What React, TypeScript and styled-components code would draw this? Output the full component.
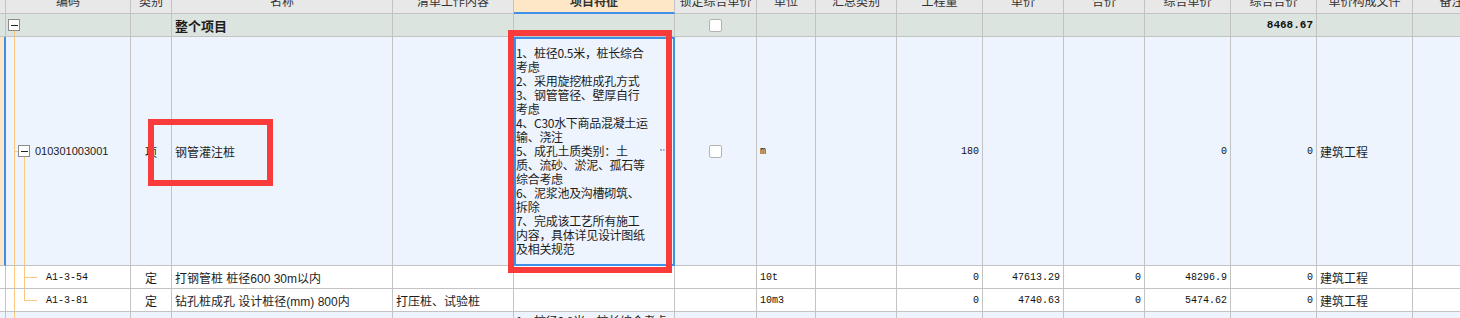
import React from "react";
import styled, { createGlobalStyle, css } from "styled-components";

const GRID = "#c3c3c3";
const GUIDE = "#fbc87d";
const BLUE = "#3f8fe9";
const PEACH = "#fde7c7";
const RED = "#fa3b3c";

const widths = [6, 125, 41, 221, 121, 161, 82, 59, 81, 86, 81, 81, 86, 86, 96, 78];
const sheetWidth = widths.reduce((a, b) => a + b, 0);

const headers = [
  "",
  "编码",
  "类别",
  "名称",
  "清单工作内容",
  "项目特征",
  "锁定综合单价",
  "单位",
  "汇总类别",
  "工程量",
  "单价",
  "合价",
  "综合单价",
  "综合合价",
  "单价构成文件",
  "备注",
];

type Tone = "head" | "root" | "bill" | "quota";
type Tree = "root" | "bill" | "quota" | "quotaLast" | "billNext";

const toneBg: Record<Tone, string> = {
  head: "#e8e8e8",
  root: "#dce4df",
  bill: "#edf4fe",
  quota: "#ffffff",
};

interface Line {
  tone: Tone;
  height: number;
  active?: boolean;
  tree: Tree;
  code?: string;
  codeMono?: boolean;
  kind?: string;
  name?: string;
  work?: string;
  spec?: string[];
  specTop?: boolean;
  selected?: boolean;
  lock?: boolean;
  unit?: string;
  qty?: string;
  price?: string;
  total?: string;
  unitComp?: string;
  compTotal?: string;
  file?: string;
}

const lines: Line[] = [
  {
    tone: "root",
    height: 23,
    tree: "root",
    name: "整个项目",
    lock: true,
    compTotal: "8468.67",
  },
  {
    tone: "bill",
    height: 229,
    active: true,
    tree: "bill",
    code: "010301003001",
    kind: "项",
    name: "钢管灌注桩",
    selected: true,
    spec: [
      "1、桩径0.5米，桩长综合",
      "考虑",
      "2、采用旋挖桩成孔方式",
      "3、钢管管径、壁厚自行",
      "考虑",
      "4、C30水下商品混凝土运",
      "输、浇注",
      "5、成孔土质类别：土",
      "质、流砂、淤泥、孤石等",
      "综合考虑",
      "6、泥浆池及沟槽砌筑、",
      "拆除",
      "7、完成该工艺所有施工",
      "内容，具体详见设计图纸",
      "及相关规范",
    ],
    lock: true,
    unit: "m",
    qty: "180",
    unitComp: "0",
    compTotal: "0",
    file: "建筑工程",
  },
  {
    tone: "quota",
    height: 23,
    tree: "quota",
    code: "A1-3-54",
    codeMono: true,
    kind: "定",
    name: "打钢管桩 桩径600 30m以内",
    unit: "10t",
    qty: "0",
    price: "47613.29",
    total: "0",
    unitComp: "48296.9",
    compTotal: "0",
    file: "建筑工程",
  },
  {
    tone: "quota",
    height: 23,
    tree: "quotaLast",
    code: "A1-3-81",
    codeMono: true,
    kind: "定",
    name: "钻孔桩成孔 设计桩径(mm) 800内",
    work: "打压桩、试验桩",
    unit: "10m3",
    qty: "0",
    price: "4740.63",
    total: "0",
    unitComp: "5474.62",
    compTotal: "0",
    file: "建筑工程",
  },
  {
    tone: "bill",
    height: 120,
    tree: "billNext",
    spec: ["1、桩径0.8米，桩长综合考虑", "2、采用旋挖桩成孔方式"],
    specTop: true,
  },
];

const GlobalStyle = createGlobalStyle`
  html, body {
    margin: 0;
    padding: 0;
    background: #fff;
  }
  body {
    font-family: "Liberation Sans", "Noto Sans CJK SC", sans-serif;
    font-size: 12px;
    color: #1d1d1d;
  }
`;

const Viewport = styled.div`
  position: relative;
  width: 1460px;
  height: 318px;
  overflow: hidden;
`;

const Sheet = styled.div`
  width: ${sheetWidth}px;
  margin-top: -12px;
`;

const Row = styled.div<{ $tone: Tone; $h: number }>`
  display: grid;
  grid-template-columns: ${widths.map((w) => `${w}px`).join(" ")};
  height: ${(p) => p.$h}px;
  background: ${(p) => toneBg[p.$tone]};
`;

const Cell = styled.div<{
  $align?: "left" | "center" | "right";
  $mono?: boolean;
  $bold?: boolean;
}>`
  box-sizing: border-box;
  min-width: 0;
  display: flex;
  align-items: center;
  justify-content: ${(p) =>
    p.$align === "right" ? "flex-end" : p.$align === "center" ? "center" : "flex-start"};
  padding: 0 3px;
  border-right: 1px solid ${GRID};
  border-bottom: 1px solid ${GRID};
  white-space: nowrap;
  overflow: hidden;

  ${(p) =>
    p.$mono &&
    css`
      font-family: "Liberation Mono", "Noto Sans CJK SC", monospace;
      font-size: 10px;
      color: #111;
    `}

  ${(p) =>
    p.$mono &&
    p.$bold &&
    css`
      font-size: 11px;
      font-weight: 700;
    `}
`;

const HeadCell = styled(Cell)<{ $active?: boolean }>`
  justify-content: center;
  color: #333;

  ${(p) =>
    p.$active &&
    css`
      background: ${PEACH};
      border-bottom: 2px solid ${BLUE};
      font-weight: 700;
    `}
`;

const Indicator = styled.div<{ $active?: boolean }>`
  box-sizing: border-box;
  border-right: 1px solid ${GRID};
  border-bottom: 1px solid ${GRID};

  ${(p) =>
    p.$active &&
    css`
      background: ${PEACH};
      border-right: 2px solid ${BLUE};
    `}
`;

const CodeCell = styled(Cell)<{ $indent: number }>`
  position: relative;
  padding-left: ${(p) => p.$indent}px;
`;

const Trunk = styled.span<{ $x: number; $fromBox?: boolean; $toMid?: boolean }>`
  position: absolute;
  left: ${(p) => p.$x}px;
  top: ${(p) => (p.$fromBox ? "calc(50% + 6px)" : "0")};
  bottom: ${(p) => (p.$toMid ? "calc(50% - 1px)" : "0")};
  width: 1px;
  background: ${GUIDE};
`;

const Branch = styled.span<{ $x: number; $w: number }>`
  position: absolute;
  left: ${(p) => p.$x}px;
  top: 50%;
  width: ${(p) => p.$w}px;
  height: 1px;
  background: ${GUIDE};
`;

const Toggle = styled.span`
  position: relative;
  z-index: 1;
  box-sizing: border-box;
  flex: none;
  width: 12px;
  height: 12px;
  margin-right: 5px;
  border: 1px solid #8b8b8b;
  background: #fff;
  display: flex;
  align-items: center;
  justify-content: center;

  &::before {
    content: "";
    width: 7px;
    height: 1px;
    background: #222;
  }
`;

const CodeText = styled.span<{ $mono?: boolean }>`
  position: relative;
  z-index: 1;
  font-size: 11px;

  ${(p) =>
    p.$mono &&
    css`
      font-family: "Liberation Mono", monospace;
      font-size: 10px;
      color: #111;
    `}
`;

const Title = styled.span`
  font-family: "Noto Sans CJK SC", sans-serif;
  font-size: 13px;
  font-weight: 700;
`;

const SpecCell = styled(Cell)<{ $top?: boolean; $selected?: boolean }>`
  position: relative;
  flex-direction: column;
  align-items: flex-start;
  justify-content: ${(p) => (p.$top ? "flex-start" : "center")};
  padding: ${(p) => (p.$top ? "2px 2px 0" : "0 2px")};
  overflow: visible;

  ${(p) =>
    p.$selected &&
    css`
      outline: 2px solid ${BLUE};
      outline-offset: -2px;
    `}
`;

const SpecLine = styled.span`
  display: block;
  height: 14px;
  line-height: 14px;
  font-family: "Noto Sans CJK SC", sans-serif;
  font-size: 12px;
  letter-spacing: -0.3px;
`;

const ResizeDots = styled.span`
  position: absolute;
  right: 9px;
  top: calc(50% - 2px);
  width: 5px;
  border-top: 2px dotted #97b4da;
`;

const Check = styled.span`
  box-sizing: border-box;
  width: 13px;
  height: 13px;
  border: 1px solid #b3b3b3;
  border-radius: 2px;
  background: #fff;
`;

const Mark = styled.div<{ $x: number; $y: number; $w: number; $h: number }>`
  position: absolute;
  left: ${(p) => p.$x}px;
  top: ${(p) => p.$y}px;
  width: ${(p) => p.$w}px;
  height: ${(p) => p.$h}px;
  box-sizing: border-box;
  border: 6px solid ${RED};
  pointer-events: none;
`;

function TreeCode({ line }: { line: Line }) {
  switch (line.tree) {
    case "root":
      return (
        <CodeCell $indent={2}>
          <Trunk $x={8} $fromBox />
          <Toggle />
        </CodeCell>
      );
    case "bill":
      return (
        <CodeCell $indent={12}>
          <Trunk $x={8} />
          <Branch $x={8} $w={4} />
          <Trunk $x={18} $fromBox />
          <Toggle />
          <CodeText>{line.code}</CodeText>
        </CodeCell>
      );
    case "quota":
    case "quotaLast":
      return (
        <CodeCell $indent={40}>
          <Trunk $x={8} />
          <Trunk $x={18} $toMid={line.tree === "quotaLast"} />
          <Branch $x={18} $w={13} />
          <CodeText $mono={line.codeMono}>{line.code}</CodeText>
        </CodeCell>
      );
    default:
      return (
        <CodeCell $indent={12}>
          <Trunk $x={8} />
        </CodeCell>
      );
  }
}

function SheetRow({ line }: { line: Line }) {
  return (
    <Row $tone={line.tone} $h={line.height}>
      <Indicator $active={line.active} />
      <TreeCode line={line} />
      <Cell $align="center">{line.kind}</Cell>
      <Cell>{line.tree === "root" ? <Title>{line.name}</Title> : line.name}</Cell>
      <Cell>{line.work}</Cell>
      <SpecCell $top={line.specTop} $selected={line.selected}>
        {line.spec?.map((s, i) => (
          <SpecLine key={i}>{s}</SpecLine>
        ))}
        {line.selected && <ResizeDots />}
      </SpecCell>
      <Cell $align="center">{line.lock && <Check />}</Cell>
      <Cell $mono>{line.unit}</Cell>
      <Cell />
      <Cell $mono $align="right">{line.qty}</Cell>
      <Cell $mono $align="right">{line.price}</Cell>
      <Cell $mono $align="right">{line.total}</Cell>
      <Cell $mono $align="right">{line.unitComp}</Cell>
      <Cell $mono $bold={line.tree === "root"} $align="right">
        {line.compTotal}
      </Cell>
      <Cell>{line.file}</Cell>
      <Cell />
    </Row>
  );
}

export default function App() {
  return (
    <>
      <GlobalStyle />
      <Viewport>
        <Sheet>
          <Row $tone="head" $h={26}>
            {headers.map((h, i) =>
              i === 0 ? (
                <Indicator key={i} />
              ) : (
                <HeadCell key={i} $active={i === 5}>
                  {h}
                </HeadCell>
              )
            )}
          </Row>
          {lines.map((line, i) => (
            <SheetRow key={i} line={line} />
          ))}
        </Sheet>
        <Mark $x={148} $y={119} $w={125} $h={67} />
        <Mark $x={508} $y={30} $w={164} $h={243} />
      </Viewport>
    </>
  );
}
